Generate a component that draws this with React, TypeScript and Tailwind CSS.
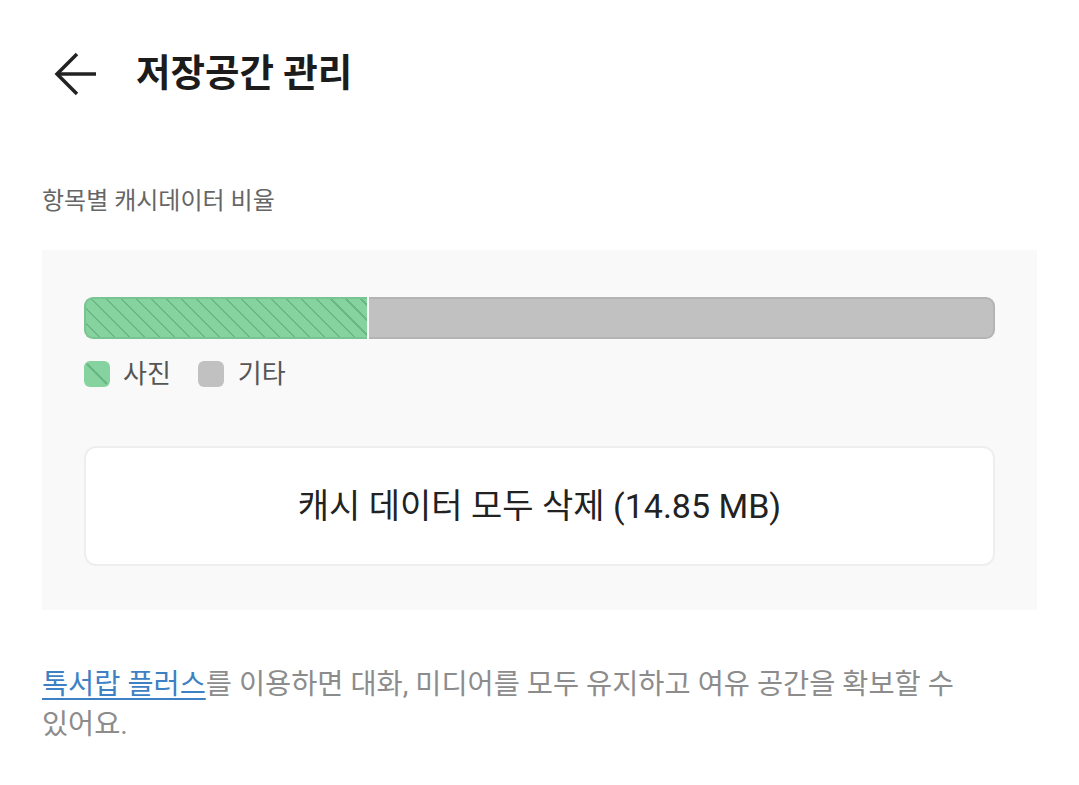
const font = 'font-["Roboto","Noto_Sans_CJK_KR",sans-serif]';

function BackArrow() {
    return (
        <svg width="44" height="44" viewBox="0 0 44 44" fill="none" stroke="#222" strokeWidth="3.5" strokeLinecap="butt" strokeLinejoin="miter">
            <path d="M42 22H3" />
            <path d="M23 2L3 22l20 20" />
        </svg>
    );
}

function PhotoSwatch() {
    return (
        <svg width="26" height="26" viewBox="0 0 26 26">
            <rect x="0" y="0" width="26" height="26" rx="6" fill="#86d3a0" />
            <line x1="3" y1="3" x2="23" y2="23" stroke="#66b482" strokeWidth="2.2" />
        </svg>
    );
}

export default function App() {
    return (
        <div className={`min-h-screen w-full bg-white px-[42px] ${font}`}>
            {/* Header */}
            <header className="flex h-[148px] items-center">
                <div className="ml-[12px] flex h-[44px] w-[44px] items-center justify-center">
                    <BackArrow />
                </div>
                <h1 className="ml-[38px] text-[37.5px] font-bold leading-none text-[#1c1c1c]">저장공간 관리</h1>
            </header>

            <p className="mt-[38px] text-[24px] leading-[30px] text-[#666666]">항목별 캐시데이터 비율</p>

            {/* Usage panel */}
            <section className="mt-[34px] bg-[#f9f9f9] px-[42px] pt-[47px] pb-[44px]">
                <div className="flex h-[42px] gap-[2px]">
                    <div className="w-[283px] rounded-l-[9px] border-2 border-r-0 border-[#79c592] bg-[repeating-linear-gradient(45deg,#86d3a0_0px,#86d3a0_8.6px,#69b785_8.6px,#69b785_10.6px)]" />
                    <div className="flex-1 rounded-r-[9px] border-2 border-l-0 border-[#b4b4b4] bg-[#c1c1c1]" />
                </div>

                <div className="mt-[22px] flex h-[26px] items-center">
                    <PhotoSwatch />
                    <span className="ml-[13px] text-[26px] leading-none text-[#555555]">사진</span>
                    <span className="ml-[27px] h-[26px] w-[26px] rounded-[6px] bg-[#c1c1c1]" />
                    <span className="ml-[14px] text-[26px] leading-none text-[#555555]">기타</span>
                </div>

                <button className="mt-[59px] flex h-[120px] w-full items-center justify-center rounded-[12px] border-2 border-[#eeeeee] bg-white text-[34px] text-[#222222]">
                    캐시 데이터 모두 삭제 (14.85 MB)
                </button>
            </section>

            <p className="mt-[55px] break-keep text-[28.4px] leading-[40px] text-[#8c8c8c]">
                <a href="#" className="text-[#3d80c4] underline decoration-[2px] underline-offset-[4px]">톡서랍 플러스</a>를 이용하면 대화, 미디어를 모두 유지하고 여유 공간을 확보할 수 있어요.
            </p>
        </div>
    );
}
